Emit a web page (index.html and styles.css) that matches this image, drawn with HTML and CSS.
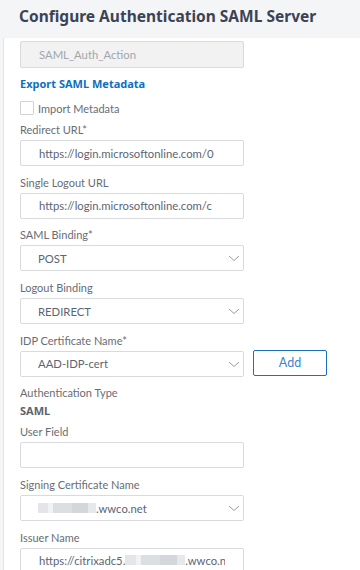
FILE: index.html
```html
<html>

<head>
    <meta name="viewport" content="width=device-width, initial-scale=1.0">
    <link rel="stylesheet" href="styles.css">
</head>

<body>
    <div class="header">Configure Authentication SAML Server</div>
    <div class="panel">
        <div class="box disabled"><span class="text">SAML_Auth_Action</span></div>
        <div class="export">Export SAML Metadata</div>
        <div class="check">
            <span class="checkbox"></span>
            Import Metadata
        </div>

        <div class="field">
            <div class="label">Redirect URL*</div>
            <div class="box"><span class="text">https://login.microsoftonline.com/0</span></div>
        </div>
        <div class="field">
            <div class="label">Single Logout URL</div>
            <div class="box"><span class="text">https://login.microsoftonline.com/c</span></div>
        </div>
        <div class="field">
            <div class="label">SAML Binding*</div>
            <div class="box select"><span class="text">POST</span>
                <svg class="chev" width="12" height="7" viewBox="0 0 12 7"><path d="M1 1 L6 5.5 L11 1" fill="none" stroke="#979ca3" stroke-width="1"/></svg>
            </div>
        </div>
        <div class="field">
            <div class="label">Logout Binding</div>
            <div class="box select"><span class="text">REDIRECT</span>
                <svg class="chev" width="12" height="7" viewBox="0 0 12 7"><path d="M1 1 L6 5.5 L11 1" fill="none" stroke="#979ca3" stroke-width="1"/></svg>
            </div>
        </div>
        <div class="field">
            <div class="label">IDP Certificate Name*</div>
            <div class="row">
                <div class="box select"><span class="text">AAD-IDP-cert</span>
                    <svg class="chev" width="12" height="7" viewBox="0 0 12 7"><path d="M1 1 L6 5.5 L11 1" fill="none" stroke="#979ca3" stroke-width="1"/></svg>
                </div>
                <button class="add">Add</button>
            </div>
        </div>

        <div class="label type">Authentication Type</div>
        <div class="value">SAML</div>

        <div class="field">
            <div class="label">User Field</div>
            <div class="box"></div>
        </div>
        <div class="field">
            <div class="label">Signing Certificate Name</div>
            <div class="box select"><span class="text"><span class="blur b1"></span>.wwco.net</span>
                <svg class="chev" width="12" height="7" viewBox="0 0 12 7"><path d="M1 1 L6 5.5 L11 1" fill="none" stroke="#979ca3" stroke-width="1"/></svg>
            </div>
        </div>
        <div class="field">
            <div class="label">Issuer Name</div>
            <div class="box"><span class="text">https://citrixadc5.<span class="blur b2"></span>.wwco.net</span></div>
        </div>
    </div>
</body>

</html>
```
FILE: styles.css
```css
body {
    margin: 0;
    background: #f4f5f7;
    font-family: Lato, "Noto Sans", sans-serif;
    color: #686d74;
}

.header {
    height: 38px;
    box-sizing: border-box;
    padding: 5px 19px 0;
    font-family: "Noto Sans", sans-serif;
    font-size: 15.5px;
    line-height: 22px;
    font-weight: bold;
    color: #3b4354;
}

.panel {
    margin-left: 3px;
    padding: 3px 0 0 16px;
    background: #fff;
    border-left: 1px solid #e2e4e7;
    height: 540px;
}

.box {
    width: 224px;
    height: 26px;
    box-sizing: border-box;
    border: 1px solid #d8dadd;
    border-radius: 2px;
    padding: 0 18px;
    display: flex;
    align-items: center;
    font-size: 11.3px;
    color: #5b6574;
    white-space: nowrap;
    background: #fff;
}

.text {
    overflow: hidden;
    min-width: 0;
    flex: 1;
}

.disabled {
    height: 27px;
    background: #f2f2f3;
    color: #a2a6ab;
    margin-bottom: 7px;
}

.export {
    font-family: "Noto Sans", sans-serif;
    font-size: 11px;
    line-height: 18px;
    font-weight: bold;
    color: #0d6fc2;
    margin-bottom: 6px;
}

.check {
    display: flex;
    align-items: center;
    height: 18px;
    font-size: 11px;
    margin-bottom: 3px;
}

.checkbox {
    width: 12px;
    height: 12px;
    border: 1px solid #cfd2d6;
    border-radius: 1px;
    margin-right: 4px;
}

.field {
    margin-bottom: 6.7px;
}

.label {
    font-size: 11px;
    line-height: 20px;
}

.select {
    position: relative;
    padding-left: 17px;
}

.chev {
    position: absolute;
    right: 3px;
    top: 9px;
}

.row {
    display: flex;
    gap: 9px;
}

.add {
    width: 74px;
    height: 26px;
    background: #fff;
    border: 1px solid #1f6fbf;
    border-radius: 2px;
    font-family: inherit;
    font-size: 12.5px;
    color: #3a86cf;
    margin-top: -1px;
}

.type {
    margin: 1px 0 0;
}

.value {
    font-family: "Noto Sans", sans-serif;
    font-size: 11px;
    line-height: 16px;
    font-weight: bold;
    color: #5e636b;
    margin-bottom: 3px;
}

.blur {
    display: inline-block;
    height: 10px;
    background: linear-gradient(90deg, #e3e5e8 0 18%, #f1f2f3 18% 26%, #dcdfe2 26% 58%, #d3d6da 58% 86%, #e6e8ea 86%);
}

.b1 {
    width: 58px;
}

.b2 {
    width: 60px;
}
```
